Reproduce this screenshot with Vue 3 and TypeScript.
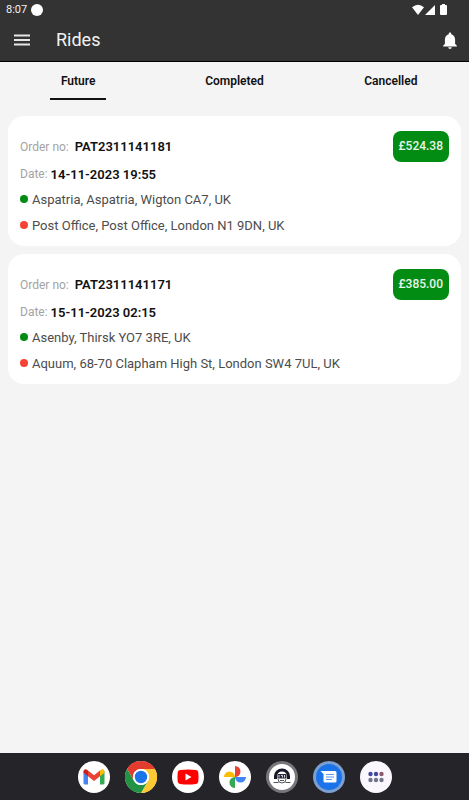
<script setup lang="ts">
import { ref } from 'vue'

interface Ride {
  order: string
  date: string
  price: string
  from: string
  to: string
}

const tabs: string[] = ['Future', 'Completed', 'Cancelled']
const active = ref<string>('Future')

const rides: Ride[] = [
  {
    order: 'PAT2311141181',
    date: '14-11-2023 19:55',
    price: '£524.38',
    from: 'Aspatria, Aspatria, Wigton CA7, UK',
    to: 'Post Office, Post Office, London N1 9DN, UK',
  },
  {
    order: 'PAT2311141171',
    date: '15-11-2023 02:15',
    price: '£385.00',
    from: 'Asenby, Thirsk YO7 3RE, UK',
    to: 'Aquum, 68-70 Clapham High St, London SW4 7UL, UK',
  },
]
</script>

<template>
  <div class="screen">
    <header class="header">
      <div class="status">
        <span class="clock">8:07</span>
        <span class="status-dot"></span>
        <svg class="signals" width="36" height="12" viewBox="0 0 36 12" fill="#fff">
          <path d="M0 3.200Q6 -1.800 12 3.200L6 11Z" />
          <path d="M23 1V11H13Z" />
          <path d="M29 1h1V0h3v1h1q1 0 1 1v8q0 1-1 1h-5q-1 0-1-1V2q0-1 1-1Z" />
        </svg>
      </div>
      <div class="toolbar">
        <button class="icon-button" type="button" aria-label="Menu">
          <svg width="16" height="12" viewBox="0 0 16 12" fill="#e6e6e6">
            <path d="M0 0.500h16v2H0zM0 5h16v2H0zM0 9.500h16v2H0z" />
          </svg>
        </button>
        <h1 class="title">Rides</h1>
        <button class="icon-button bell" type="button" aria-label="Notifications">
          <svg width="14" height="17" viewBox="4 2 16 20" fill="#fff">
            <path d="M12 22c1.100 0 2-.9 2-2h-4c0 1.100.9 2 2 2zm6-6v-5c0-3.070-1.640-5.640-4.500-6.320V4c0-.83-.67-1.500-1.500-1.500s-1.500.67-1.500 1.500v.68C7.630 5.360 6 7.920 6 11v5l-2 2v1h16v-1l-2-2z" />
          </svg>
        </button>
      </div>
    </header>

    <nav class="tabs">
      <button
        v-for="tab in tabs"
        :key="tab"
        class="tab"
        :class="{ active: tab === active }"
        type="button"
        @click="active = tab"
      >
        {{ tab }}
      </button>
    </nav>

    <main class="list">
      <article v-for="ride in rides" :key="ride.order" class="card">
        <div class="row order">
          <span class="label">Order no:</span>
          <strong class="value">{{ ride.order }}</strong>
          <span class="price">{{ ride.price }}</span>
        </div>
        <div class="row date">
          <span class="label">Date:</span>
          <strong class="value">{{ ride.date }}</strong>
        </div>
        <div class="row place">
          <span class="dot pickup"></span>
          <span>{{ ride.from }}</span>
        </div>
        <div class="row place">
          <span class="dot dropoff"></span>
          <span>{{ ride.to }}</span>
        </div>
      </article>
    </main>

    <footer class="dock">
      <button class="app" type="button" aria-label="Gmail">
        <svg viewBox="0 0 32 32">
          <circle cx="16" cy="16" r="16" fill="#fff" />
          <path d="M5.500 10v12q0 1.500 1.500 1.500h3V14Z" fill="#4285f4" />
          <path d="M26.500 10v12q0 1.500-1.500 1.500h-3V14Z" fill="#34a853" />
          <path d="M10 9.500l6 4.700 6-4.700v5.700l-6 4.700-6-4.700Z" fill="#ea4335" />
          <path d="M5.500 11q0-3 2.500-2.700L10 9.500v5.700l-4.500-3.400Z" fill="#c5221f" />
          <path d="M26.500 11q0-3-2.500-2.700L22 9.500v5.700l4.500-3.400Z" fill="#fbbc04" />
        </svg>
      </button>
      <button class="app" type="button" aria-label="Chrome">
        <svg viewBox="0 0 32 32">
          <circle cx="16" cy="16" r="16" fill="#fff" />
          <path d="M2.140 8A16 16 0 0 1 29.860 8H16A8 8 0 0 0 9.070 20Z" fill="#e33b2e" />
          <path d="M29.860 8A16 16 0 0 1 16 32L22.930 20A8 8 0 0 0 16 8Z" fill="#fcc934" />
          <path d="M16 32A16 16 0 0 1 2.140 8L9.070 20A8 8 0 0 0 22.930 20Z" fill="#229342" />
          <circle cx="16" cy="16" r="8" fill="#fff" />
          <circle cx="16" cy="16" r="6.200" fill="#1a73e8" />
        </svg>
      </button>
      <button class="app" type="button" aria-label="YouTube">
        <svg viewBox="0 0 32 32">
          <circle cx="16" cy="16" r="16" fill="#fff" />
          <path d="M8 9q8-1 16 0 2 .3 2.300 2.500.5 4.500 0 9-.3 2.200-2.300 2.500-8 1-16 0-2-.3-2.300-2.500-.5-4.500 0-9Q6 9.300 8 9Z" fill="#f00" />
          <path d="M13.500 12.500v7l6-3.500Z" fill="#fff" />
        </svg>
      </button>
      <button class="app" type="button" aria-label="Photos">
        <svg viewBox="0 0 32 32">
          <circle cx="16" cy="16" r="16" fill="#fff" />
          <path d="M16 5a5.500 5.500 0 0 1 0 11Z" fill="#ea4335" />
          <path d="M27 16a5.500 5.500 0 0 1-11 0Z" fill="#4285f4" />
          <path d="M16 27a5.500 5.500 0 0 1 0-11Z" fill="#34a853" />
          <path d="M5 16a5.500 5.500 0 0 1 11 0Z" fill="#fbbc04" />
        </svg>
      </button>
      <button class="app" type="button" aria-label="Driver">
        <svg viewBox="0 0 32 32">
          <circle cx="16" cy="16" r="16" fill="#77777b" />
          <circle cx="16" cy="16" r="13" fill="#fff" />
          <path d="M8 18v-3a8 7.500 0 0 1 16 0v3h-3v-3a5 4.500 0 0 0-10 0v3Z" fill="#17172b" />
          <path d="M11.500 13h9v4.500h-9z" fill="#28283a" />
          <path d="M13 14v2.500M15 14.500h1.500v2M18.500 14v2.500" fill="none" stroke="#fff" stroke-width=".8" />
          <path d="M12 18q0 4 4 4t4-4M7.500 21.500h5M19.500 21.500h5M14 19.500h4" fill="none" stroke="#55555c" stroke-width="1" />
        </svg>
      </button>
      <button class="app" type="button" aria-label="Messages">
        <svg viewBox="0 0 32 32">
          <circle cx="16" cy="16" r="16" fill="#7c9fcf" />
          <circle cx="16" cy="16" r="13" fill="#1a73e8" />
          <path d="M7.500 10H22q1.500 0 1.500 1.500v8.500q0 1.500-1.500 1.500H12q-1.500 0-1.500-1.500v-7Z" fill="#fff" />
          <path d="M13 13.500h8M13 16h8M13 18.500h6" stroke="#5c9cf2" stroke-width="1.200" />
        </svg>
      </button>
      <button class="app" type="button" aria-label="All apps">
        <svg viewBox="0 0 32 32">
          <circle cx="16" cy="16" r="16" fill="#fbf7ff" />
          <g fill="#41479b">
            <circle cx="10.500" cy="13" r="2.200" />
            <circle cx="16" cy="13" r="2.200" />
          </g>
          <circle cx="21.500" cy="13" r="2.200" fill="#8b5870" />
          <g fill="#70758a">
            <circle cx="10.500" cy="19" r="2.200" />
            <circle cx="16" cy="19" r="2.200" />
            <circle cx="21.500" cy="19" r="2.200" />
          </g>
        </svg>
      </button>
    </footer>
  </div>
</template>

<style>
body {
  margin: 0;
  background: #f4f4f4;
}
</style>

<style scoped>
.screen {
  min-height: 100vh;
  display: flex;
  flex-direction: column;
  background: #f4f4f4;
  font-family: Roboto, 'Liberation Sans', sans-serif;
  color: #111;
}

button {
  padding: 0;
  border: 0;
  background: none;
  font-family: inherit;
  cursor: pointer;
}

svg {
  display: block;
}

.header {
  background: #333;
  border-bottom: 1px solid #000;
  color: #f2f2f2;
}

.status {
  display: flex;
  align-items: center;
  height: 19px;
  padding: 0 21px 0 6px;
}

.clock {
  font-size: 11px;
  line-height: 19px;
}

.status-dot {
  width: 12px;
  height: 12px;
  margin-left: 4px;
  border-radius: 50%;
  background: #fff;
}

.signals {
  margin-left: auto;
}

.toolbar {
  display: flex;
  align-items: center;
  height: 42px;
  padding: 0 12px 0 14px;
}

.icon-button {
  display: flex;
}

.bell {
  margin-left: auto;
}

.title {
  margin: 0 0 0 26px;
  font-size: 18px;
  line-height: 24px;
  font-weight: 400;
}

.tabs {
  display: grid;
  grid-template-columns: repeat(3, 1fr);
}

.tab {
  display: flex;
  flex-direction: column;
  align-items: center;
  height: 39px;
  padding-top: 2px;
  font-size: 12px;
  line-height: 34px;
  font-weight: 600;
  color: #111;
}

.tab.active::after {
  content: '';
  width: 56px;
  height: 2px;
  background: #111;
}

.list {
  flex: 1;
  display: flex;
  flex-direction: column;
  gap: 8px;
  padding: 15px 8px;
}

.card {
  padding: 15px 12px 8px;
  border-radius: 16px;
  background: #fff;
}

.row {
  display: flex;
  align-items: center;
  gap: 4px;
}

.order {
  gap: 6px;
  height: 31px;
}

.date {
  gap: 3px;
  height: 24px;
}

.place {
  height: 26px;
  font-size: 13px;
  color: #4c4c4c;
}

.label {
  font-size: 12px;
  color: #a3a3a3;
}

.value {
  font-size: 13px;
  font-weight: 600;
}

.price {
  margin-left: auto;
  padding: 0 6px;
  border-radius: 8px;
  background: #038c14;
  color: #e8f5e9;
  font-size: 12px;
  line-height: 31px;
  font-weight: 500;
}

.dot {
  width: 8px;
  height: 8px;
  border-radius: 50%;
}

.pickup {
  background: #038c14;
}

.dropoff {
  background: #f44336;
}

.dock {
  display: flex;
  align-items: center;
  justify-content: center;
  gap: 15px;
  height: 47px;
  background: #252529;
}

.app {
  width: 32px;
  height: 32px;
}
</style>
